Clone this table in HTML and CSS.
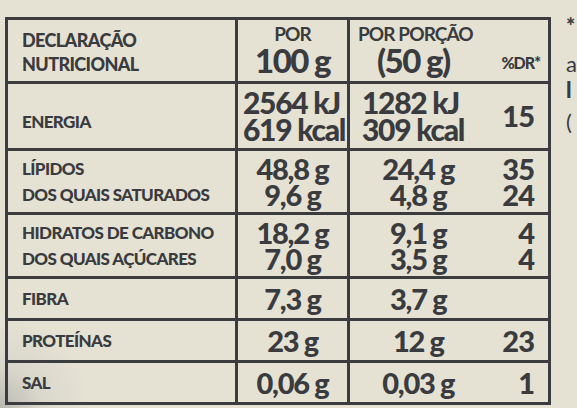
FILE: index.html
```html
<!DOCTYPE html>
<html lang="pt">
<head>
    <meta charset="UTF-8">
    <meta name="viewport" content="width=device-width, initial-scale=1.0">
    <title>Declaração Nutricional</title>
    <link rel="stylesheet" href="styles.css">
</head>
<body>
    <div class="label">
        <table class="nutrition">
            <colgroup>
                <col class="col-name">
                <col class="col-100">
                <col class="col-portion">
                <col class="col-dr">
            </colgroup>
            <tr class="head-row">
                <td class="name">DECLARAÇÃO<br>NUTRICIONAL</td>
                <td class="per100">
                    <span class="small-head">POR</span>
                    <span class="big-head">100 g</span>
                </td>
                <td class="portion">
                    <span class="small-head">POR PORÇÃO</span>
                    <span class="big-head">(50 g)</span>
                </td>
                <td class="dr dr-head">%DR*</td>
            </tr>
            <tr class="energy-row">
                <td class="name">ENERGIA</td>
                <td class="per100">2564 kJ<br>619 kcal</td>
                <td class="portion">1282 kJ<br>309 kcal</td>
                <td class="dr">15</td>
            </tr>
            <tr class="double-row">
                <td class="name">LÍPIDOS<br>DOS QUAIS SATURADOS</td>
                <td class="per100">48,8 g<br>9,6 g</td>
                <td class="portion">24,4 g<br>4,8 g</td>
                <td class="dr">35<br>24</td>
            </tr>
            <tr class="double-row">
                <td class="name">HIDRATOS DE CARBONO<br>DOS QUAIS AÇÚCARES</td>
                <td class="per100">18,2 g<br>7,0 g</td>
                <td class="portion">9,1 g<br>3,5 g</td>
                <td class="dr">4<br>4</td>
            </tr>
            <tr class="single-row">
                <td class="name">FIBRA</td>
                <td class="per100">7,3 g</td>
                <td class="portion">3,7 g</td>
                <td class="dr"></td>
            </tr>
            <tr class="single-row">
                <td class="name">PROTEÍNAS</td>
                <td class="per100">23 g</td>
                <td class="portion">12 g</td>
                <td class="dr">23</td>
            </tr>
            <tr class="single-row">
                <td class="name">SAL</td>
                <td class="per100">0,06 g</td>
                <td class="portion">0,03 g</td>
                <td class="dr">1</td>
            </tr>
        </table>

        <div class="edge">
            <span class="edge-star">*</span>
            <span class="edge-a">a</span>
            <span class="edge-bar">l</span>
            <span class="edge-paren">(</span>
        </div>
    </div>
</body>
</html>
```

FILE: styles.css
```css
body {
    margin: 0;
    width: 577px;
    height: 408px;
    overflow: hidden;
    background-color: #e5e2d4;
    background-image: radial-gradient(circle at 0 408px, #b9b8b1 0, #d9d7cb 40px, rgba(229, 226, 212, 0) 90px);
    color: #3a3b3e;
    font-family: Lato, "Noto Sans", sans-serif;
}
.label {
    display: flex;
    padding: 17px 0 0 5px;
}
.nutrition {
    flex: none;
    border-collapse: collapse;
    width: 543px;
    border: 3px solid #3b3c3f;
    table-layout: fixed;
}
.col-name {
    width: 230px;
}
.col-100 {
    width: 112px;
}
.col-portion {
    width: 133px;
}
.col-dr {
    width: 68px;
}
.nutrition td {
    padding: 0;
    border-top: 3px solid #3b3c3f;
    vertical-align: middle;
    font-size: 29px;
    font-weight: 900;
    letter-spacing: -1.3px;
    line-height: 26px;
    white-space: nowrap;
}
.nutrition .name {
    padding-left: 14px;
    border-right: 3px solid #3b3c3f;
    font-size: 17px;
    letter-spacing: -0.6px;
    text-align: left;
}
.nutrition .per100 {
    border-right: 3px solid #3b3c3f;
    text-align: center;
}
.nutrition .portion {
    text-align: center;
    padding-left: 5px;
}
.nutrition .dr {
    text-align: right;
    padding-right: 14px;
    letter-spacing: -1px;
}
.head-row {
    height: 64px;
}
.head-row .name {
    font-size: 18px;
    line-height: 24px;
    padding-top: 3px;
}
.head-row .per100,
.head-row .portion {
    vertical-align: top;
    padding-top: 4px;
}
.small-head {
    display: block;
    font-size: 19px;
    font-weight: 700;
    letter-spacing: -0.9px;
    line-height: 20px;
}
.big-head {
    display: block;
    font-size: 33px;
    letter-spacing: -1.6px;
    line-height: 32px;
}
.head-row .portion .small-head {
    text-align: left;
    padding-left: 3px;
}
.head-row .portion .big-head {
    padding-right: 10px;
}
.head-row .dr-head {
    vertical-align: bottom;
    padding-bottom: 10px;
    padding-right: 8px;
    font-size: 16px;
    letter-spacing: -1px;
    line-height: 16px;
}
.energy-row {
    height: 67px;
}
.energy-row .per100,
.energy-row .portion {
    font-size: 30px;
    line-height: 27px;
    text-align: left;
    padding-left: 5px;
}
.energy-row .portion {
    padding-left: 12px;
}
.energy-row .name {
    padding-top: 12px;
}
.double-row {
    height: 64px;
}
.single-row {
    height: 42px;
}
.edge {
    display: flex;
    flex-direction: column;
    padding-left: 15px;
    font-size: 22px;
    line-height: 1;
}
.edge-star {
    font-size: 22px;
    font-weight: 900;
    margin-top: -2px;
}
.edge-a {
    margin-top: 16px;
}
.edge-bar {
    margin-top: 4px;
    font-weight: 900;
}
.edge-paren {
    margin-top: 10px;
}
```
